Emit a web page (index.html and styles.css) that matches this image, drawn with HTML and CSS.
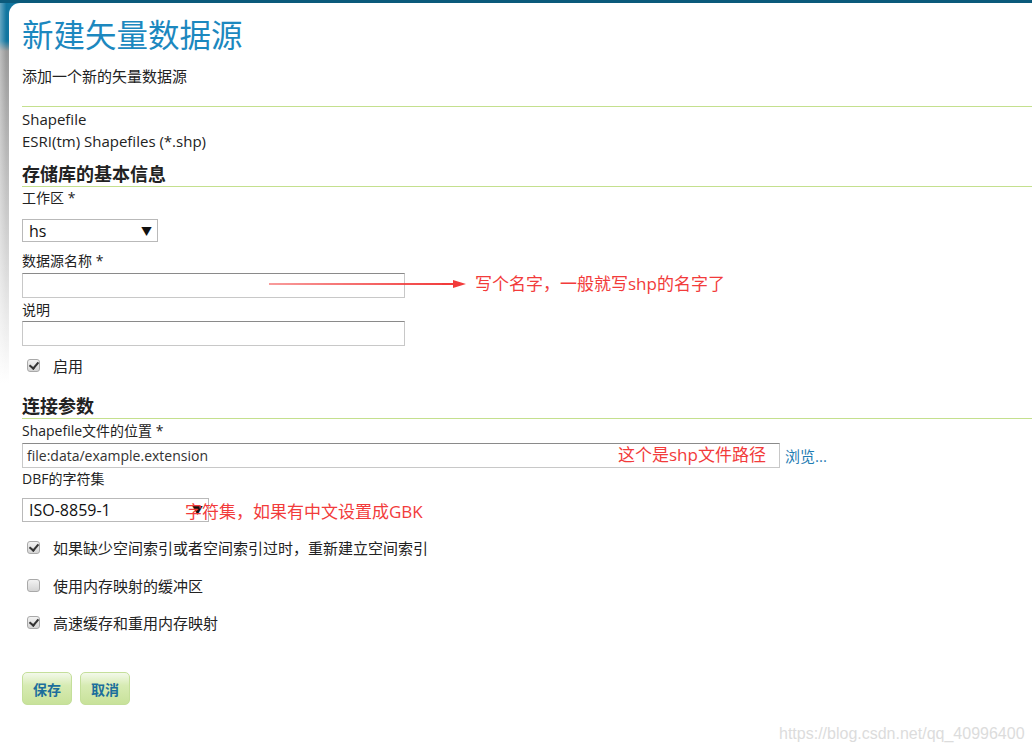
FILE: index.html
```html
<!DOCTYPE html>
<html lang="zh">
<head>
<meta charset="utf-8">
<title>新建矢量数据源</title>
<link rel="stylesheet" href="styles.css">
</head>
<body>
<div class="page">
  <div class="topbar"></div>
  <div class="frame">
    <div class="gutter"></div>
    <div class="panel">
      <h1 class="title">新建矢量数据源</h1>
      <p class="subtitle">添加一个新的矢量数据源</p>
      <div class="rule"></div>
      <div class="store-type">Shapefile</div>
      <div class="store-desc">ESRI(tm) Shapefiles (*.shp)</div>

      <h2 class="section first">存储库的基本信息</h2>
      <div class="label l-ws">工作区 *</div>
      <div class="select sel-ws"><span>hs</span><span class="arrow">▼</span></div>
      <div class="label l-name">数据源名称 *</div>
      <div class="input in-name"></div>
      <div class="label l-desc">说明</div>
      <div class="input in-desc"></div>
      <div class="check-row r-enable"><span class="cb checked"></span><span class="cb-label">启用</span></div>

      <h2 class="section second">连接参数</h2>
      <div class="label l-url">Shapefile文件的位置 *</div>
      <div class="url-row">
        <div class="input in-url">file:data/example.extension</div>
        <a class="browse">浏览...</a>
      </div>
      <div class="label l-dbf">DBF的字符集</div>
      <div class="select sel-cs"><span>ISO-8859-1</span><span class="arrow">▼</span></div>
      <div class="check-row r-1"><span class="cb checked"></span><span class="cb-label">如果缺少空间索引或者空间索引过时，重新建立空间索引</span></div>
      <div class="check-row r-2"><span class="cb"></span><span class="cb-label">使用内存映射的缓冲区</span></div>
      <div class="check-row r-3"><span class="cb checked"></span><span class="cb-label">高速缓存和重用内存映射</span></div>

      <div class="buttons">
        <button class="btn">保存</button>
        <button class="btn">取消</button>
      </div>
    </div>
  </div>

  <svg class="arrow-line" width="200" height="10" viewBox="0 0 200 10">
    <path d="M0 4.6 L186 4 L186 6 L0 5.4 Z" fill="#f23b3b"/>
    <path d="M184 1 L197 5 L184 9 Z" fill="#f23b3b"/>
  </svg>
  <div class="note note-name">写个名字，一般就写shp的名字了</div>
  <div class="note note-url">这个是shp文件路径</div>
  <div class="note note-cs">字符集，如果有中文设置成GBK</div>
  <div class="watermark">https://blog.csdn.net/qq_40996400</div>
</div>
</body>
</html>
```

FILE: styles.css
```css
* { box-sizing: border-box; }
html, body { margin: 0; padding: 0; background: #fff; }
body {
  font-family: "Open Sans", "Noto Sans CJK SC", sans-serif;
  color: #222;
  width: 1032px;
  height: 754px;
  overflow: hidden;
}
.page { position: relative; width: 1032px; height: 754px; }
.topbar {
  height: 4px;
  background: #0b5a7b;
  border-bottom: 1px solid #9fd0e0;
}
.frame {
  display: flex;
  background: linear-gradient(to bottom, #1276a0 0, #1276a0 38px, #9a9a9a 48px, #d6d6d6 250px, #ffffff 380px);
  margin-top: -1px;
}
.gutter {
  width: 9px;
  flex: none;
  background: linear-gradient(to right, rgba(255,255,255,0.35), rgba(255,255,255,0) 70%);
}
.panel {
  flex: 1;
  background: #fff;
  border-top-left-radius: 11px;
  padding: 12px 0 40px 13px;
  min-height: 750px;
}
.title {
  margin: 0;
  font-size: 31.5px;
  line-height: 40px;
  font-weight: normal;
  color: #1c88bf;
}
.subtitle {
  margin: 11px 0 0;
  font-size: 15px;
  line-height: 20px;
}
.rule {
  margin-top: 20px;
  height: 1px;
  background: #c4e08e;
}
.store-type { margin-top: 1px; font-size: 15px; line-height: 22px; }
.store-desc { font-size: 15px; line-height: 22px; }
.section {
  margin: 0;
  font-size: 18px;
  line-height: 24px;
  font-weight: bold;
  color: #222;
  border-bottom: 1px solid #c4e08e;
}
.section.first { margin-top: 10px; }
.section.second { margin-top: 19px; }
.label { font-size: 14px; line-height: 20px; }
.l-ws { margin-top: 1px; }
.l-name { margin-top: 9px; }
.l-desc { margin-top: 2px; }
.l-url { margin-top: 2px; }
.l-dbf { margin-top: 1px; }

.select {
  display: flex;
  align-items: center;
  justify-content: space-between;
  border: 1px solid #b9b9b9;
  background: #fff;
  font-size: 16px;
  padding: 0 5px 0 6px;
  color: #111;
}
.select .arrow { font-size: 11px; color: #111; }
.sel-ws { margin-top: 11px; width: 136px; height: 23px; }
.sel-cs { margin-top: 9px; width: 187px; height: 24px; }

.input {
  border: 1px solid #c8c8c8;
  border-top-color: #8a8a8a;
  background: #fff;
  height: 25px;
}
.in-name { margin-top: 2px; width: 383px; }
.in-desc { margin-top: 1px; width: 383px; }
.url-row {
  display: flex;
  align-items: center;
  gap: 5px;
  margin-top: 2px;
}
.in-url {
  width: 758px;
  font-size: 14px;
  line-height: 23px;
  padding-left: 4px;
  color: #333;
}
.browse { color: #1f7db3; font-size: 15px; cursor: pointer; }

.check-row {
  display: flex;
  align-items: center;
  height: 20px;
  padding-left: 5px;
}
.r-enable { margin-top: 9px; }
.r-1 { margin-top: 15px; }
.r-2 { margin-top: 18px; }
.r-3 { margin-top: 17px; }
.cb {
  position: relative;
  width: 13px;
  height: 13px;
  border: 1px solid #a9a9a9;
  border-radius: 3px;
  background: linear-gradient(to bottom, #f2f2f2, #d4d4d4);
  flex: none;
}
.cb.checked::after {
  content: "";
  position: absolute;
  left: 3px;
  top: 0px;
  width: 4px;
  height: 7px;
  border-right: 2px solid #333;
  border-bottom: 2px solid #333;
  transform: rotate(40deg);
}
.cb-label { margin-left: 13px; font-size: 15px; color: #222; }

.buttons { display: flex; gap: 8px; margin-top: 40px; }
.btn {
  width: 50px;
  height: 33px;
  border: 1px solid #c4df9a;
  border-radius: 5px;
  background: linear-gradient(to bottom, #f3f9ea 0%, #d7ebb3 40%, #c8e29a 100%);
  color: #1c6e9c;
  font-family: "Noto Sans CJK SC", sans-serif;
  font-weight: bold;
  font-size: 14px;
  padding: 0;
}

.arrow-line { position: absolute; left: 269px; top: 279px; }
.note {
  position: absolute;
  color: #f23b3b;
  font-size: 17px;
  line-height: 22px;
  white-space: nowrap;
}
.note-name { left: 475px; top: 273px; }
.note-url { left: 618px; top: 444px; }
.note-cs { left: 185px; top: 501px; }
.watermark {
  position: absolute;
  left: 779px;
  top: 725px;
  font-family: "Liberation Sans", sans-serif;
  font-size: 16px;
  color: #dcdcdc;
}
```
